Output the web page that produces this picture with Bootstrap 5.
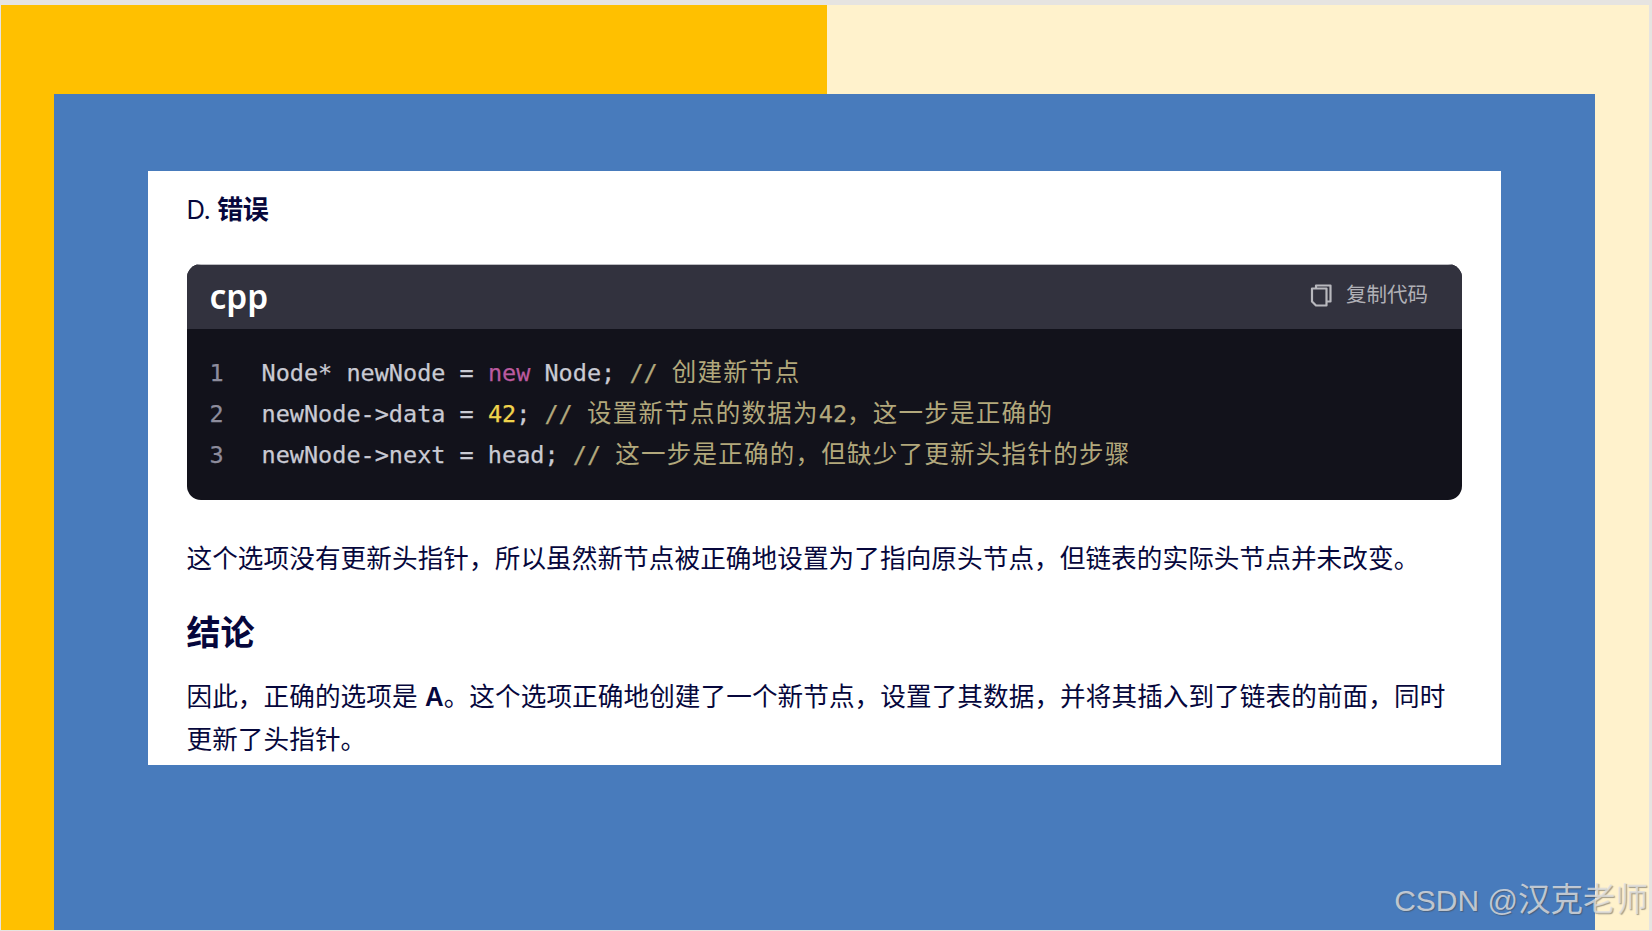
<!DOCTYPE html>
<html lang="zh">
<head>
<meta charset="utf-8">
<title>cpp</title>
<link rel="stylesheet" href="https://cdn.jsdelivr.net/npm/bootstrap@5.3.0/dist/css/bootstrap.min.css">
<style>
html,body{height:931px;overflow:hidden;margin:0}
body{background:#e6e4e1;font-family:"Inter","Noto Sans CJK SC",sans-serif;color:#06073c}
.slide-frame{height:931px;padding:5px 3px 1px 1px;position:relative}
.slide-bg{height:100%;padding:89px 54px 0 53px;background:linear-gradient(90deg,#ffc000 0,#ffc000 826px,#fff2cc 826px,#fff2cc 100%)}
.slide-blue{height:100%;background:#487bbc;padding:77px 94px 0 94px}
.slide-sheet{background:#fff;height:594px;padding:21px 39px 0 38.5px;overflow:hidden}
.opt-line{font-size:25.6px;line-height:36px;margin:0 0 36px;letter-spacing:-.4px}
.opt-line strong{font-weight:700;font-size:26px}
.code-box{background:#12121b;border-radius:14px;overflow:hidden;height:236px;margin-bottom:37px}
.code-head{background:#32323e;height:65px;padding:0 34px 4px 23px;border-top:1px solid #bdbdc2}
.code-lang{color:#fff;font-size:33.5px;font-weight:600;font-family:"Noto Sans",sans-serif;line-height:1;margin-top:3px}
.code-copy{color:#b0b0b6;font-size:20.5px;gap:14px}
.code-body{padding:21px 0 0 23px;font-family:"DejaVu Sans Mono",monospace;font-size:23.5px;line-height:41px;color:#c9cad3;-webkit-text-stroke:.25px}
.code-row{white-space:pre;height:41px}
.ln{color:#8d8c9c;display:inline-block;width:52px}
.kw{color:#bb5a9f}.num{color:#f0d44d}.cm{color:#b2a87c}
.cjk{font-family:"Noto Sans CJK SC",sans-serif;font-size:24.5px;letter-spacing:1.26px;-webkit-text-stroke:0}
.body-text{font-size:25.6px;line-height:43.5px;margin:0;letter-spacing:.09px}
.sec-title{font-size:34px;font-weight:700;line-height:43px;margin:30px 0 21px}
.mark-wm{position:absolute;right:4px;bottom:10px;font-family:"Liberation Sans","Noto Sans CJK SC",sans-serif;font-size:30px;line-height:40px;color:rgba(225,225,225,.78);text-shadow:1px 1px 1px rgba(70,70,70,.5);white-space:nowrap}
.mark-cjk{font-size:32.5px}
</style>
</head>
<body>
<div class="slide-frame">
  <div class="slide-bg">
    <div class="slide-blue">
      <div class="slide-sheet">
        <p class="opt-line">D. <strong>错误</strong></p>
        <div class="code-box">
          <div class="code-head d-flex align-items-center justify-content-between">
            <span class="code-lang">cpp</span>
            <span class="code-copy d-flex align-items-center">
              <svg width="22" height="24" viewBox="0 0 22 24" fill="none" stroke="#b8b8bd" stroke-width="2.2" stroke-linejoin="round"><path d="M6 5V2.5h14.5V18.500H16.500"/><path d="M2 5.500h14.500V22.500H6L2 18.500Z"/></svg>
              <span>复制代码</span>
            </span>
          </div>
          <div class="code-body">
            <div class="code-row"><span class="ln">1</span>Node* newNode = <span class="kw">new</span> Node; <span class="cm">// <span class="cjk">创建新节点</span></span></div>
            <div class="code-row"><span class="ln">2</span>newNode-&gt;data = <span class="num">42</span>; <span class="cm">// <span class="cjk">设置新节点的数据为</span>42<span class="cjk">，这一步是正确的</span></span></div>
            <div class="code-row"><span class="ln">3</span>newNode-&gt;next = head; <span class="cm">// <span class="cjk">这一步是正确的，但缺少了更新头指针的步骤</span></span></div>
          </div>
        </div>
        <p class="body-text">这个选项没有更新头指针，所以虽然新节点被正确地设置为了指向原头节点，但链表的实际头节点并未改变。</p>
        <h3 class="sec-title">结论</h3>
        <p class="body-text">因此，正确的选项是 <b class="fw-semibold">A</b>。这个选项正确地创建了一个新节点，设置了其数据，并将其插入到了链表的前面，同时更新了头指针。</p>
      </div>
    </div>
  </div>
  <div class="mark-wm">CSDN @<span class="mark-cjk">汉克老师</span></div>
</div>
</body>
</html>
